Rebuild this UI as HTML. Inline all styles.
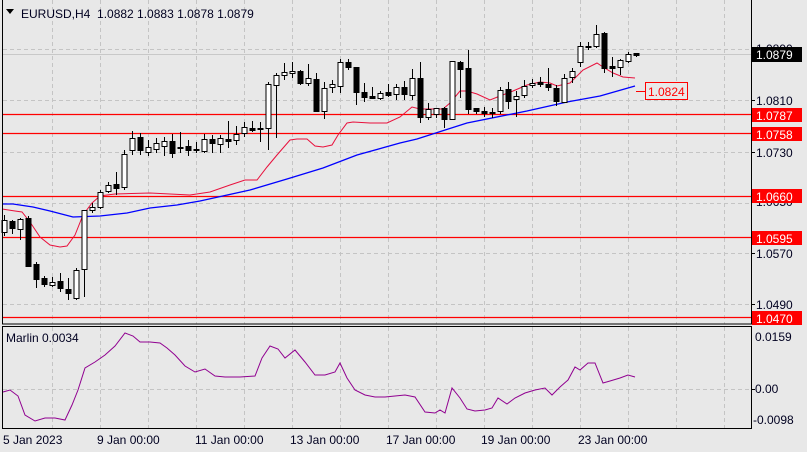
<!DOCTYPE html>
<html><head><meta charset="utf-8">
<style>
html,body{margin:0;padding:0;background:#e8e8e8;}
body{width:807px;height:452px;overflow:hidden;}
svg{display:block;font-family:"Liberation Sans",sans-serif;}
</style></head>
<body>
<svg id="s" width="807" height="452" xmlns="http://www.w3.org/2000/svg">
<rect width="807" height="452" fill="#e8e8e8"/>
<g id="grid" stroke="#c4c4c4" stroke-dasharray="4,3" stroke-width="1"></g>
<line x1="2" y1="54.5" x2="751" y2="54.5" stroke="#c8c8c8"/>
<g stroke="#ff0000" stroke-width="1.2">
<line x1="2" y1="114.5" x2="751" y2="114.5"/>
<line x1="2" y1="133.5" x2="751" y2="133.5"/>
<line x1="2" y1="196.5" x2="751" y2="196.5"/>
<line x1="2" y1="237.5" x2="751" y2="237.5"/>
<line x1="2" y1="317.5" x2="751" y2="317.5"/>
</g>
<polyline fill="none" stroke="#0000ff" stroke-width="1.3" points="2,204 13,204 33,207 50,211 73,217 100,216 127,213 150,208 177,205 200,201 250,190 287,179 323,168 357,155 400,143 417,139 467,123 527,111 567,102 600,96 635,86"/>
<polyline fill="none" stroke="#e8103c" stroke-width="1" points="2,209 15,211 22,212 30,222 40,237 50,245 60,247 67,246 75,235 83,215 92,203 100,196 107,195 115,194 150,193 190,195 210,192 230,185 245,180 257,180 267,167 277,155 290,140 297,139 307,139 315,146 323,147 332,145 338,135 347,123 353,122 370,123 387,123 400,117 412,107 420,109 443,109 450,103 460,91 467,91 477,94 490,100 500,96 513,91 527,85 540,82 550,83 557,86 570,83 583,70 597,63 603,67 613,73 623,77 635,78"/>
<g id="candles"></g>
<line x1="636" y1="91.5" x2="645" y2="91.5" stroke="#ff0000"/>
<rect x="645.5" y="82.5" width="42" height="17" fill="#e8e8e8" stroke="#ff0000"/>
<text x="648" y="96" font-size="12" fill="#ff0000">1.0824</text>
<!-- frames -->
<rect x="2.5" y="-1" width="749" height="325" fill="none" stroke="#000"/>
<rect x="2.5" y="326.5" width="749" height="102" fill="none" stroke="#000"/>
<!-- indicator -->
<g id="igrid" stroke="#c4c4c4" stroke-dasharray="4,3"></g>
<polyline fill="none" stroke="#900090" stroke-width="1" points="3,392 10,390 18,396 25,415 35,421 45,418 55,418 65,420 72,405 78,390 85,368 95,362 105,355 115,346 125,333 133,336 140,342 150,342 160,343 167,348 175,355 185,366 195,372 205,369 215,376 225,377 240,377 255,376 262,358 270,346 278,349 285,358 295,350 305,362 315,375 325,375 335,372 340,363 347,378 355,390 365,395 375,397 385,397 395,396 405,395 415,397 425,412 435,413 440,410 445,413 452,388 460,398 467,409 475,411 485,410 492,408 498,398 507,404 515,398 525,393 535,390 545,388 552,395 560,387 568,380 575,367 580,370 588,363 595,363 603,383 610,381 620,378 628,375 635,377"/>
<!-- texts -->
<path d="M6,9 L14,9 L10,14 Z" fill="#000"/>
<text x="21" y="18" font-size="12" fill="#000020">EURUSD,H4&#160;&#160;1.0882 1.0883 1.0878 1.0879</text>
<text x="6" y="342" font-size="12" fill="#000020">Marlin 0.0034</text>
<g font-size="12" fill="#000020">
<text x="756" y="53">1.0890</text>
<text x="756" y="105">1.0810</text>
<text x="756" y="157">1.0730</text>
<text x="756" y="206">1.0650</text>
<text x="756" y="258">1.0570</text>
<text x="756" y="309">1.0490</text>
<text x="755" y="341">0.0159</text>
<text x="755" y="393">0.00</text>
<text x="753" y="424">-0.0098</text>
</g>
<g font-size="12" fill="#fff">
<rect x="752" y="47" width="50" height="15" fill="#000"/><text x="756" y="59">1.0879</text>
<rect x="752" y="108" width="50" height="14" fill="#ff0000"/><text x="756" y="120">1.0787</text>
<rect x="752" y="127" width="50" height="14" fill="#ff0000"/><text x="756" y="139">1.0758</text>
<rect x="752" y="189" width="50" height="14" fill="#ff0000"/><text x="756" y="201">1.0660</text>
<rect x="752" y="231" width="50" height="14" fill="#ff0000"/><text x="756" y="243">1.0595</text>
<rect x="752" y="311" width="50" height="14" fill="#ff0000"/><text x="756" y="323">1.0470</text>
</g>
<g stroke="#000">
<line x1="751" y1="49.5" x2="755" y2="49.5"/><line x1="751" y1="100.5" x2="755" y2="100.5"/>
<line x1="751" y1="152.5" x2="755" y2="152.5"/><line x1="751" y1="253.5" x2="755" y2="253.5"/>
<line x1="751" y1="304.5" x2="755" y2="304.5"/><line x1="751" y1="389.5" x2="755" y2="389.5"/>
</g>
<g font-size="12" fill="#000020">
<text x="3" y="444">5 Jan 2023</text>
<text x="97" y="444">9 Jan 00:00</text>
<text x="195" y="444">11 Jan 00:00</text>
<text x="290" y="444">13 Jan 00:00</text>
<text x="386" y="444">17 Jan 00:00</text>
<text x="481" y="444">19 Jan 00:00</text>
<text x="578" y="444">23 Jan 00:00</text>
</g>
</svg>
<script>
var NS="http://www.w3.org/2000/svg";
function el(p,t,a){var e=document.createElementNS(NS,t);for(var k in a)e.setAttribute(k,a[k]);p.appendChild(e);return e;}
var g=document.getElementById('grid'),ig=document.getElementById('igrid');
[49,100,152,203,253,304].forEach(function(y){el(g,'line',{x1:3,x2:751,y1:y+.5,y2:y+.5});});
for(var k=0;k<15;k++){var x=Math.round(51.5+48*k)+.5;el(g,'line',{x1:x,x2:x,y1:0,y2:324});el(ig,'line',{x1:x,x2:x,y1:327,y2:428});}
el(ig,'line',{x1:3,x2:751,y1:389.5,y2:389.5});
var d=[[232,215,236,220],[221,220,234,228],[229,218,240,219],[218,216,266,266],[264,262,288,279],[278,276,287,284],[285,277,287,282],[281,273,292,288],[289,278,300,293],[298,268,300,270],[269,210,297,210],[210,203,213,207],[207,190,209,192],[191,182,193,185],[184,172,195,188],[187,150,190,154],[150,131,155,138],[137,133,155,150],[152,140,156,147],[149,138,153,143],[146,137,156,141],[141,134,158,153],[148,132,153,147],[146,140,156,150],[149,142,153,150],[151,134,153,139],[139,135,153,143],[144,135,153,138],[139,121,148,141],[140,126,145,134],[133,122,137,127],[128,121,132,130],[128,122,142,129],[128,82,150,84],[85,73,138,75],[75,63,80,72],[73,62,78,71],[71,70,85,83],[83,64,86,78],[79,73,111,111],[111,82,119,88],[87,80,93,84],[86,59,93,62],[62,59,70,67],[67,67,105,92],[92,83,102,97],[96,87,99,98],[98,91,100,93],[92,84,97,95],[94,84,100,87],[87,81,100,94],[95,69,100,78],[78,62,123,117],[117,103,120,109],[114,108,118,108],[108,107,128,119],[119,61,119,61],[62,61,98,69],[68,50,114,109],[108,108,114,111],[111,107,117,113],[113,108,118,112],[111,87,114,90],[89,82,109,101],[99,91,117,96],[95,80,98,86],[85,79,88,83],[82,77,87,84],[84,68,91,87],[88,85,106,101],[102,74,102,78],[77,68,83,71],[62,42,67,46],[46,42,50,47],[46,25,48,34],[33,32,73,68],[66,57,77,68],[67,59,75,60],[61,52,63,54],[53,53,57,55]];
var c=document.getElementById('candles');
d.forEach(function(v,i){var x=4+8*i+.5,o=v[0],h=v[1],l=v[2],cl=v[3];
el(c,'line',{x1:x,x2:x,y1:h,y2:l,stroke:'#000'});
var t=Math.min(o,cl),b=Math.max(o,cl);if(b-t<1)b=t+1;
el(c,'rect',{x:x-2.5,y:t+.5,width:5,height:b-t,fill:cl>o?'#000':'#fff',stroke:'#000'});});
</script>
</body></html>
